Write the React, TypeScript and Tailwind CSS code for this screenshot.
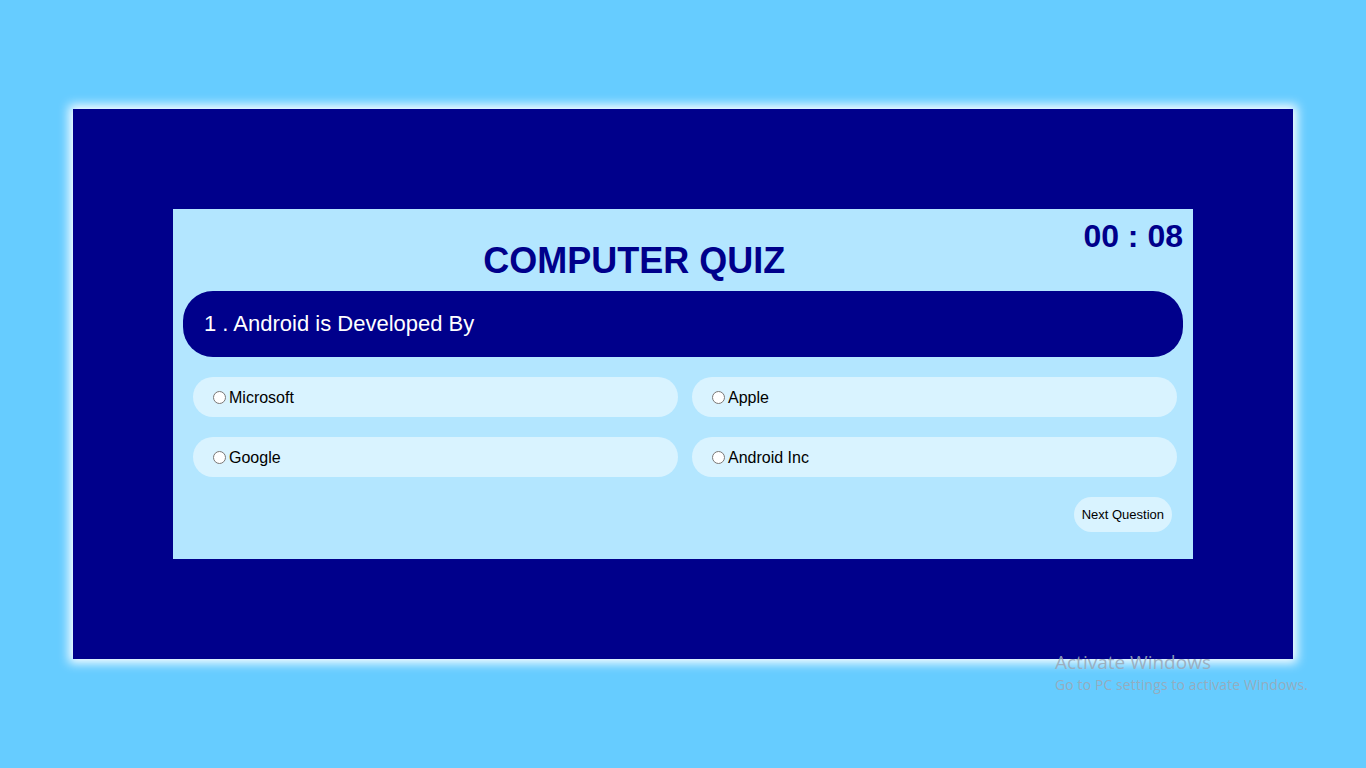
import React from 'react';

const options = ['Microsoft', 'Apple', 'Google', 'Android Inc'];

const App: React.FC = () => {
  return (
    <div className="relative min-h-screen w-full bg-[#66ccff] flex items-center justify-center font-['Liberation_Sans',Arial,sans-serif]">
      <div className="w-[1220px] h-[550px] bg-[#00008b] p-[100px] shadow-[0_0_10px_4px_#ffffff]">
        <div className="h-[350px] bg-[#b3e6ff] px-[10px] pt-[9px]">
          <div className="flex items-start">
            <h1 className="flex-1 text-center mt-[22px] pl-[2px] text-[36px] leading-[41px] font-bold text-[#00008b]">
              COMPUTER QUIZ
            </h1>
            <div className="text-[32px] leading-[37px] font-bold text-[#00008b]">00 : 08</div>
          </div>

          <div className="mt-[10px] h-[66px] rounded-[30px] bg-[#00008b] flex items-center px-[21px]">
            <p className="text-[22px] text-white pb-[1px]">1 . Android is Developed By</p>
          </div>

          <div className="ml-[10px] w-[984px] mt-[20px] grid grid-cols-2 gap-x-[14px] gap-y-[20px]">
            {options.map((opt) => (
              <label
                key={opt}
                className="h-[40px] rounded-full bg-[#d9f3ff] flex items-center pl-[15px] pt-[1px] text-[16px] text-black"
              >
                <input type="radio" name="answer" className="ml-[5px] mr-[3px] mb-[1px] w-[13px] h-[13px]" />
                <span>{opt}</span>
              </label>
            ))}
          </div>

          <div className="ml-[10px] w-[984px] mt-[20px] flex justify-end pr-[5px]">
            <button className="h-[35px] px-2 rounded-full bg-[#d9f3ff] text-[13px] text-black">
              Next Question
            </button>
          </div>
        </div>
      </div>

      <div className="absolute left-[1055px] top-[650px] font-['Open_Sans',sans-serif] text-[#9aa9b8]/90 pointer-events-none">
        <div className="text-[19px] leading-[24px]">Activate Windows</div>
        <div className="text-[14px] leading-[18px] mt-[2px] tracking-[0.1px]">Go to PC settings to activate Windows.</div>
      </div>
    </div>
  );
};

export default App;
